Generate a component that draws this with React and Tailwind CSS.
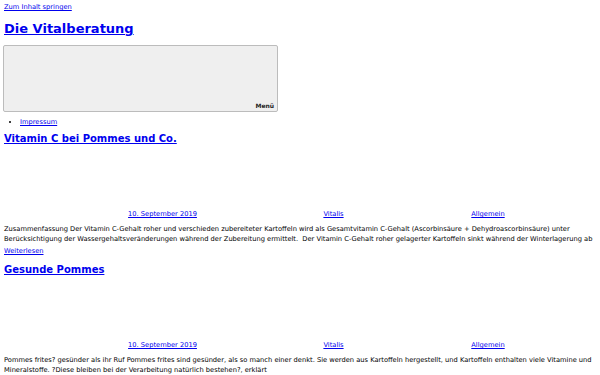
import React from "react";

const link = "text-[#0000ee] underline";

function Meta() {
  return (
    <div className="flex h-[10px] items-center">
      <div className="w-[317px] text-center">
        <a href="#" className={link}>10. September 2019</a>
      </div>
      <div className="w-[25px] text-center">
        <a href="#" className={link}>Vitalis</a>
      </div>
      <div className="ml-[42px] w-[200px] text-center">
        <a href="#" className={link}>Allgemein</a>
      </div>
    </div>
  );
}

function Post({ title, children, more }) {
  return (
    <article>
      <h2 className="h-[18px] text-[10px] font-bold leading-[18px]">
        <a href="#" className={link}>{title}</a>
      </h2>
      {/* image placeholder, empty in the shot */}
      <div className="h-[61px]" />
      <Meta />
      <p className="mt-[5px] leading-[10px]">{children}</p>
      {more && (
        <a href="#" className={`${link} mt-[2px] inline-block`}>
          Weiterlesen
        </a>
      )}
    </article>
  );
}

export default function App() {
  return (
    <div className="min-h-screen bg-white px-[4px] pt-[2px] font-['DejaVu_Sans',sans-serif] text-[6.7px] leading-[10px] text-black">
      <a href="#" className={link}>Zum Inhalt springen</a>
      <h1 className="mt-[7px] h-[20px] text-[13px] font-bold leading-[20px]">
        <a href="#" className={link}>Die Vitalberatung</a>
      </h1>
      <button className="mt-[6px] -ml-[1px] flex h-[67px] w-[275px] items-end justify-end rounded-[2px] border border-[#bcbcbc] bg-[#efefef] px-[3px] pb-[1px] text-[6px] font-bold leading-[8px] text-[#222]">
        Menü
      </button>
      <ul className="mt-[5px] pl-[16px]">
        <li className="list-disc">
          <a href="#" className={link}>Impressum</a>
        </li>
      </ul>
      <div className="mt-[3px]">
        <Post title="Vitamin C bei Pommes und Co." more>
          Zusammenfassung Der Vitamin C-Gehalt roher und verschieden zubereiteter Kartoffeln wird als Gesamtvitamin C-Gehalt (Ascorbinsäure + Dehydroascorbinsäure) unter Berücksichtigung der Wassergehaltsveränderungen während der Zubereitung ermittelt.&nbsp; Der Vitamin C-Gehalt roher gelagerter Kartoffeln sinkt während der Winterlagerung ab
        </Post>
        <div className="mt-[5px]">
          <Post title="Gesunde Pommes">
            Pommes frites? gesünder als ihr Ruf Pommes frites sind gesünder, als so manch einer denkt. Sie werden aus Kartoffeln hergestellt, und Kartoffeln enthalten viele Vitamine und Mineralstoffe. ?Diese bleiben bei der Verarbeitung natürlich bestehen?, erklärt
          </Post>
        </div>
      </div>
    </div>
  );
}
